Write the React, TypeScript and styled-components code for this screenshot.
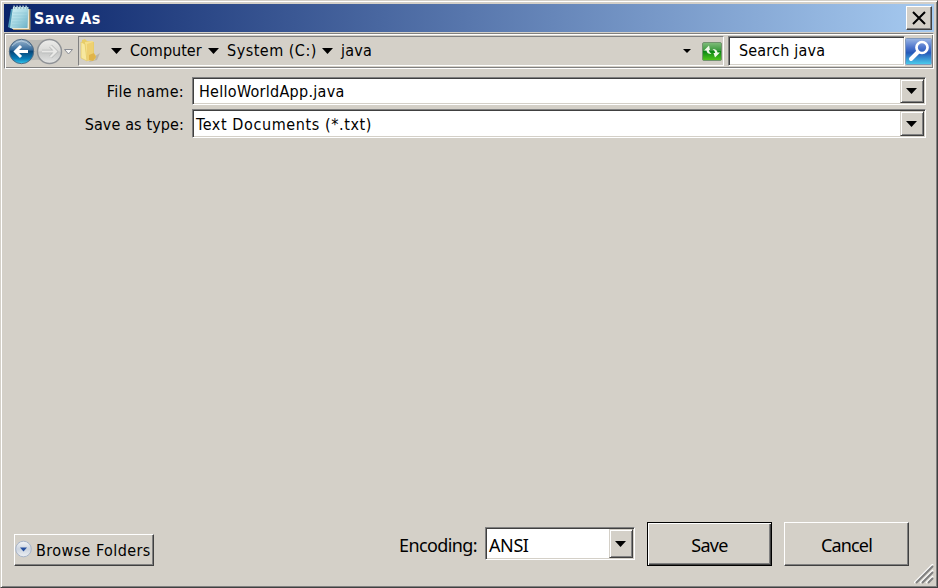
import React from "react";
import styled, { createGlobalStyle, css } from "styled-components";

const face = "#d4d0c8";
const shade = "#808080";
const dark = "#404040";

const GlobalStyle = createGlobalStyle`
  * { box-sizing: border-box; }
  html, body { margin: 0; padding: 0; }
  body { background: ${face}; overflow: hidden; }
  button, input { font: inherit; color: inherit; border-radius: 0; margin: 0; padding: 0; }
  svg { display: block; flex: none; }
`;

const raised = css`
  border: 1px solid;
  border-color: ${face} ${dark} ${dark} ${face};
  box-shadow: inset 1px 1px 0 #fff, inset -1px -1px 0 ${shade};
  background: ${face};
`;

const sunken = css`
  border: 1px solid;
  border-color: ${shade} #fff #fff ${shade};
  box-shadow: inset 1px 1px 0 ${dark}, inset -1px -1px 0 ${face};
  background: #fff;
`;

const Dialog = styled.main`
  ${raised}
  width: 938px;
  height: 588px;
  padding: 3px;
  display: flex;
  flex-direction: column;
  position: relative;
  color: #000;
  font: 16px/20px "DejaVu Sans Condensed", "DejaVu Sans", sans-serif;
  font-stretch: condensed;
`;

const TitleBar = styled.header`
  height: 28px;
  flex: none;
  display: flex;
  align-items: center;
  padding: 0 2px 0 3px;
  background: linear-gradient(90deg, #0a246a, #a6caf0);
  color: #fff;
`;

const Label = styled.span<{ $width: number; $spacing?: number; $shift?: number }>`
  display: block;
  flex: none;
  width: ${(p) => p.$width}px;
  letter-spacing: ${(p) => p.$spacing ?? 0}px;
  margin-top: ${(p) => p.$shift ?? 0}px;
  text-align: left;
  white-space: nowrap;
`;

const Title = styled.h1`
  margin: 1px auto 0 3px;
  font: bold 16px/20px "DejaVu Sans Condensed", "DejaVu Sans", sans-serif;
  font-stretch: condensed;
  letter-spacing: 0.4px;
`;

const CloseButton = styled.button`
  width: 26px;
  height: 24px;
  border: 1px solid;
  border-color: #fff ${dark} ${dark} #fff;
  box-shadow: inset -1px -1px 0 ${shade};
  background: ${face};
  display: grid;
  place-items: center;
  padding: 0 1px 0 0;
`;

const Toolbar = styled.nav`
  height: 36px;
  flex: none;
  margin-top: 1px;
  display: flex;
  align-items: center;
  border: 1px solid;
  border-color: ${shade} #fff #fff ${shade};
  box-shadow: inset 1px 1px 0 #fff, inset -1px -1px 0 ${shade};
  padding: 1px 1px 1px 3px;
`;

const AddressBar = styled.div`
  width: 646px;
  height: 30px;
  margin-left: 4px;
  border: 1px solid;
  border-color: ${shade} #fff #fff ${shade};
  display: flex;
  align-items: center;
`;

const Crumb = styled.div<{ $width: number }>`
  display: flex;
  align-items: center;
  gap: 8px;
  width: ${(p) => p.$width}px;
`;

const AddressTools = styled.div`
  display: flex;
  align-items: center;
  gap: 11px;
  margin: 0 1px 0 auto;
`;

const SearchField = styled.div`
  ${sunken}
  width: 177px;
  height: 30px;
  margin-left: 4px;
  padding: 0 0 0 10px;
  display: flex;
  align-items: center;
`;

const SearchButton = styled.button`
  border: 0;
  background: none;
`;

const Form = styled.section`
  display: grid;
  grid-template-columns: 180px 734px;
  column-gap: 8px;
  row-gap: 4px;
  margin-top: 8px;
`;

const FieldName = styled.label<{ $spacing: number }>`
  text-align: right;
  align-self: center;
  letter-spacing: ${(p) => p.$spacing}px;
  padding-top: 2px;
`;

const Combo = styled.div<{ $height: number; $indent: number }>`
  ${sunken}
  height: ${(p) => p.$height}px;
  padding: 1px 1px 1px ${(p) => p.$indent}px;
  display: flex;
  align-items: center;
  justify-content: space-between;
`;

const DropButton = styled.button`
  ${raised}
  width: 24px;
  align-self: stretch;
  display: grid;
  place-items: center;
  padding-right: 1px;
`;

const Footer = styled.footer`
  margin-top: auto;
  display: flex;
  align-items: flex-end;
  padding: 0 25px 18px 10px;
`;

const BrowseButton = styled.button`
  width: 140px;
  height: 32px;
  border: 1px solid;
  border-color: #fff ${dark} ${dark} #fff;
  box-shadow: inset -1px -1px 0 ${shade};
  background: ${face};
  display: flex;
  align-items: center;
  gap: 2px;
`;

const Encoding = styled.div`
  display: grid;
  grid-template-columns: 80px 150px;
  column-gap: 6px;
  align-items: center;
  margin: 0 12px 6px 245px;
  font: 18px/22px "Noto Sans", sans-serif;
`;

const ActionButton = styled.button<{ $primary?: boolean }>`
  width: 125px;
  height: 44px;
  background: ${face};
  border: 1px solid;
  border-color: ${(p) => (p.$primary ? "#000" : `#fff ${dark} ${dark} #fff`)};
  box-shadow: ${(p) =>
    p.$primary
      ? `inset 1px 1px 0 #fff, inset -1px -1px 0 ${dark}, inset -2px -2px 0 ${shade}`
      : `inset -1px -1px 0 ${shade}`};
  font: 18px/22px "Noto Sans", sans-serif;
  letter-spacing: ${(p) => (p.$primary ? -0.7 : -0.85)}px;
  padding-top: 2px;
  & + & { margin-left: 12px; }
`;

const Grip = styled.svg`
  position: absolute;
  right: 3px;
  bottom: 3px;
`;

const Arrow = ({ w = 11, h = 6 }: { w?: number; h?: number }) => (
  <svg width={w} height={h} viewBox="0 0 11 6" preserveAspectRatio="none">
    <path d="M0 0H11L5.5 6Z" />
  </svg>
);

const Notepad = () => (
  <svg width="24" height="26" viewBox="0 0 24 26">
    <defs>
      <linearGradient id="page" x2="1" y2="1">
        <stop stopColor="#d7f3f6" />
        <stop offset=".5" stopColor="#a9d9e4" />
        <stop offset="1" stopColor="#65adc5" />
      </linearGradient>
    </defs>
    <path d="M8 4H23.5V25H6Z" fill="#b49a6a" />
    <path d="M7 4H22V24H5Z" fill="#eee9d6" />
    <path d="M4 4L1 22L5 24L7 4Z" fill="#4d98b7" />
    <path d="M6 2H21.5L20.5 23H3Z" fill="url(#page)" />
    <path d="M6 8H20M5.7 11H20M5.3 14H20M5 17H19M4.7 20H19" stroke="#86c2d1" strokeWidth=".5" />
    <path d="M7.5 1V4M10.5 1V4M13.5 1V4M16.5 1V4M19.5 1V4" stroke="#5b8b9d" strokeWidth="1.2" />
    <path d="M7 .5V4M10 .5V4M13 .5V4M16 .5V4M19 .5V4" stroke="#e5f4f6" />
  </svg>
);

const Travel = () => (
  <svg width="66" height="28" viewBox="0 0 66 28">
    <defs>
      <linearGradient id="back" x2="0" y2="1">
        <stop stopColor="#9fb8cf" />
        <stop offset=".42" stopColor="#376c9c" />
        <stop offset=".5" stopColor="#084679" />
        <stop offset=".8" stopColor="#087db8" />
        <stop offset="1" stopColor="#36c9ee" />
      </linearGradient>
      <linearGradient id="forward" x2="0" y2="1">
        <stop stopColor="#ededeb" />
        <stop offset=".48" stopColor="#d8d8d6" />
        <stop offset=".52" stopColor="#c6c7c6" />
        <stop offset="1" stopColor="#e4e5e4" />
      </linearGradient>
    </defs>
    <path d="M12 2Q28 4 42 2V25Q28 20 12 26Z" fill="#bab9b5" />
    <circle cx="13.5" cy="14.5" r="12.2" fill="url(#back)" stroke="#536b82" />
    <path d="M4 9Q13 -1 23 9" fill="none" stroke="#d9e6ef" strokeWidth="1" opacity=".6" />
    <path d="M20 14.5H8M13 9L7.5 14.5L13 20" fill="none" stroke="#fff" strokeWidth="3" />
    <circle cx="41.5" cy="14.5" r="12" fill="url(#forward)" stroke="#8f9296" strokeWidth="1.4" />
    <path d="M34 14.5H48M42.5 9L48 14.5L42.5 20" fill="none" stroke="#b4b6b6" strokeWidth="3.6" />
    <path d="M34 14.5H48M42.5 9L48 14.5L42.5 20" fill="none" stroke="#e9e9e7" strokeWidth="2.2" />
    <path d="M56.5 12.5H64.5L60.5 17Z" fill="#f5f5f4" stroke="#8a8d94" />
  </svg>
);

const Folder = () => (
  <svg width="22" height="26" viewBox="0 0 22 26">
    <path d="M13 20L21 15L18 22L10 24Z" fill="#aaa69b" opacity=".65" />
    <path d="M3 2L6 1L8 3L15 4V20L9 21L3 19Z" fill="#e8cd68" />
    <path d="M6 4L14 3V18L7 20Z" fill="#f5df8a" />
    <path d="M2 4L6 6L8 23L2 20Z" fill="#f7e89f" stroke="#dfc45d" strokeWidth=".6" />
    <path d="M8 6L14 4V16L17 17L16 22L8 23Z" fill="#eed071" />
    <path d="M10 17L15 15L17 19L14 23L10 22Z" fill="#e0b44a" />
  </svg>
);

const Refresh = () => (
  <svg width="20" height="19" viewBox="0 0 20 19">
    <defs>
      <linearGradient id="green" x2="0" y2="1">
        <stop stopColor="#81bd7c" />
        <stop offset=".46" stopColor="#38983a" />
        <stop offset=".5" stopColor="#0b8615" />
        <stop offset="1" stopColor="#52c91c" />
      </linearGradient>
    </defs>
    <rect x=".5" y=".5" width="19" height="18" rx="1.5" fill="url(#green)" stroke="#71936d" />
    <path d="M2 8.5L7 3.5L8 8H6.8Q7 10.5 9.5 12Q4.8 12 4.5 8.5Z" fill="#f0faea" />
    <path d="M18 10.5L13 15.5L11.5 11H13.2Q13 8.5 10.5 7Q15.2 7 15.5 10.5Z" fill="#f0faea" />
  </svg>
);

const SearchIcon = () => (
  <svg width="27" height="27" viewBox="0 0 27 27">
    <defs>
      <linearGradient id="blue" x2="0" y2="1">
        <stop stopColor="#9bb6e4" />
        <stop offset=".35" stopColor="#4d74cc" />
        <stop offset=".55" stopColor="#2559b9" />
        <stop offset="1" stopColor="#4bcfed" />
      </linearGradient>
    </defs>
    <rect x=".5" y=".5" width="26" height="26" rx="1" fill="url(#blue)" stroke="#8099bc" />
    <path d="M12.5 14.5L6 21" stroke="#fff" strokeWidth="4" strokeLinecap="round" />
    <circle cx="17" cy="9.5" r="5.5" fill="none" stroke="#fff" strokeWidth="2.7" />
  </svg>
);

const ExpandIcon = () => (
  <svg width="19" height="20" viewBox="0 0 19 20">
    <defs>
      <linearGradient id="orb" x2="0" y2="1">
        <stop stopColor="#f3f5f8" />
        <stop offset=".5" stopColor="#ccd4df" />
        <stop offset="1" stopColor="#edf0f4" />
      </linearGradient>
    </defs>
    <circle cx="8.5" cy="9" r="7.8" fill="url(#orb)" stroke="#a8b5c9" />
    <path d="M5 7.5H12L8.5 11.5Z" fill="#254f9f" />
  </svg>
);

export default function App() {
  return (
    <>
      <GlobalStyle />
      <Dialog>
        <TitleBar>
          <Notepad />
          <Title>Save As</Title>
          <CloseButton aria-label="Close">
            <svg width="14" height="14" viewBox="0 0 14 14">
              <path d="M1 1L13 13M13 1L1 13" stroke="#000" strokeWidth="2" />
            </svg>
          </CloseButton>
        </TitleBar>
        <Toolbar>
          <Travel />
          <AddressBar>
            <Folder />
            <Crumb $width={107}><Label $width={2} /><Arrow /><Label $width={74}>Computer</Label></Crumb>
            <Crumb $width={114}><Arrow /><Label $width={90} $spacing={0.5}>System (C:)</Label></Crumb>
            <Crumb $width={60}><Arrow /><Label $width={32} $spacing={0.2}>java</Label></Crumb>
            <AddressTools><Arrow w={8} h={4} /><Refresh /></AddressTools>
          </AddressBar>
          <SearchField><Label $width={90} $spacing={0.18}>Search java</Label></SearchField>
          <SearchButton aria-label="Search"><SearchIcon /></SearchButton>
        </Toolbar>
        <Form>
          <FieldName $spacing={0.3}>File name:</FieldName>
          <Combo $height={28} $indent={6}>
            <Label $width={146} $spacing={0.28} $shift={1}>HelloWorldApp.java</Label>
            <DropButton aria-label="File names"><Arrow /></DropButton>
          </Combo>
          <FieldName $spacing={0.12}>Save as type:</FieldName>
          <Combo $height={29} $indent={3}>
            <Label $width={176} $spacing={0.6} $shift={2}>Text Documents (*.txt)</Label>
            <DropButton aria-label="File types"><Arrow /></DropButton>
          </Combo>
        </Form>
        <Footer>
          <BrowseButton>
            <ExpandIcon />
            <Label $width={116} $spacing={0.42} $shift={1}>Browse Folders</Label>
          </BrowseButton>
          <Encoding>
            <Label $width={80} $spacing={-0.6} $shift={2}>Encoding:</Label>
            <Combo $height={33} $indent={3}>
              <Label $width={42} $spacing={-0.4} $shift={2}>ANSI</Label>
              <DropButton aria-label="Encodings"><Arrow /></DropButton>
            </Combo>
          </Encoding>
          <ActionButton $primary>Save</ActionButton>
          <ActionButton>Cancel</ActionButton>
        </Footer>
        <Grip width="20" height="20" viewBox="0 0 20 20">
          <path d="M0 19L19 0M6 19L19 6M12 19L19 12" stroke="#fff" strokeWidth="1.5" />
          <path d="M2 19L19 2M8 19L19 8M14 19L19 14" stroke={shade} strokeWidth="2" />
        </Grip>
      </Dialog>
    </>
  );
}
